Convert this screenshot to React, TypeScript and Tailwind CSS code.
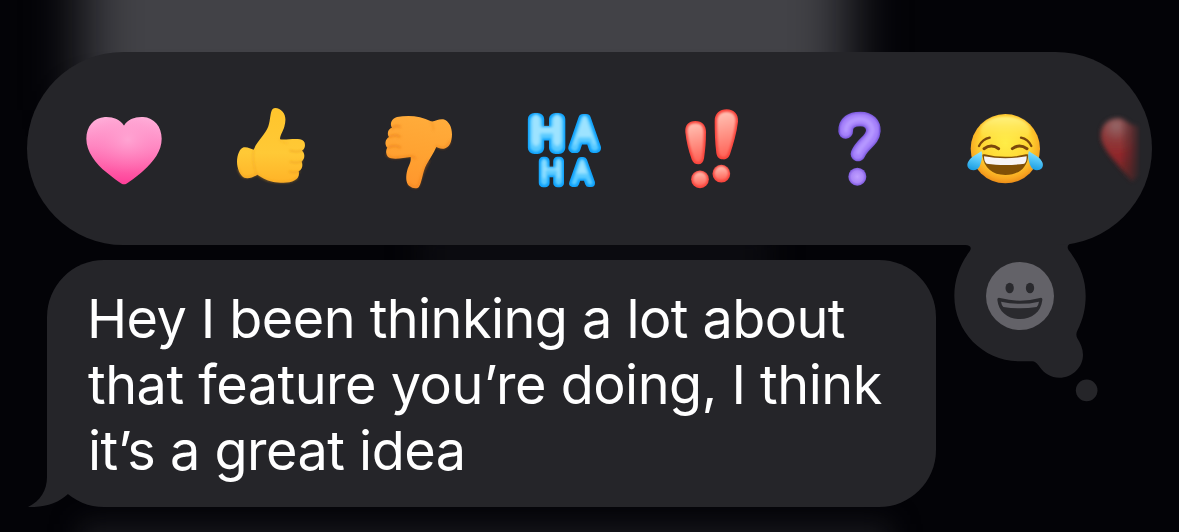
import React from 'react';

interface IconProps {
  className?: string;
}

const ICON_CLASS = 'h-[110px] w-[110px] block';

const HeartIcon = ({ className }: IconProps) => (
  <svg viewBox="-3 -6 330 330" className={className}>
    <defs>
      <linearGradient id="heart" x1="0.5" y1="0" x2="0.45" y2="1">
        <stop offset="0" stopColor="#ffb3dc" />
        <stop offset="0.45" stopColor="#ff86c1" />
        <stop offset="0.75" stopColor="#ff61aa" />
        <stop offset="1" stopColor="#ff3f98" />
      </linearGradient>
      <radialGradient id="heartShine" cx="0.55" cy="0.34" r="0.5">
        <stop offset="0" stopColor="#ffaad6" stopOpacity="0.75" />
        <stop offset="1" stopColor="#ff80bd" stopOpacity="0" />
      </radialGradient>
    </defs>
    <path
      d="M162 92C149 73 129 65 105 66C70 68 49 96 49 131C49 170 77 205 109 232C129 248 144 260 155 266Q162 269 169 266C184 257 205 240 220 227C251 199 275 168 275 131C275 94 252 68 219 66C195 65 174 73 162 92Z"
      fill="url(#heart)"
    />
    <path
      d="M162 92C149 73 129 65 105 66C70 68 49 96 49 131C49 170 77 205 109 232C129 248 144 260 155 266Q162 269 169 266C184 257 205 240 220 227C251 199 275 168 275 131C275 94 252 68 219 66C195 65 174 73 162 92Z"
      fill="url(#heartShine)"
    />
  </svg>
);

const ThumbUpIcon = ({ className }: IconProps) => (
  <svg viewBox="-12 -6 330 330" className={className}>
    <defs>
      <linearGradient id="up" x1="0.5" y1="0" x2="0.5" y2="1">
        <stop offset="0" stopColor="#ffc52c" />
        <stop offset="0.6" stopColor="#ffc936" />
        <stop offset="1" stopColor="#ffb327" />
      </linearGradient>
      <filter id="soft" x="-20%" y="-20%" width="140%" height="140%">
        <feGaussianBlur stdDeviation="2.5" />
      </filter>
    </defs>
    <path
      d="M101 164C111 139 136 119 145 94C152 74 150 50 158 42C165 35 180 41 188 50C198 62 198 78 193 95C189 109 180 120 180 133C197 136 221 129 240 133C253 135 257 145 254 157C252 163 249 165 246 167C256 175 255 192 245 200C250 212 246 224 236 229C239 241 235 250 224 256C207 266 180 264 157 260C138 256 124 247 112 239C101 247 84 252 73 248C60 242 51 219 51 200C51 181 59 160 71 157C83 155 92 162 101 164Z"
      fill="url(#up)"
    />
    <g fill="none" stroke="#eb9a20" strokeLinecap="round" filter="url(#soft)">
      <path d="M248 167Q228 173 210 167" strokeWidth="4" opacity="0.75" />
      <path d="M247 199Q227 206 211 200" strokeWidth="4" opacity="0.75" />
      <path d="M238 230Q222 235 208 230" strokeWidth="4" opacity="0.75" />
      <path d="M101 165Q95 195 109 238" strokeWidth="4" opacity="0.45" />
      <path d="M179 133Q190 145 202 144" strokeWidth="4" opacity="0.3" />
      <path d="M55 222Q63 248 80 247Q98 246 111 237Q135 260 175 261Q218 264 232 248" strokeWidth="5" opacity="0.5" />
    </g>
  </svg>
);

const ThumbDownIcon = ({ className }: IconProps) => (
  <svg viewBox="-21 -6 330 330" className={className}>
    <defs>
      <linearGradient id="down" x1="0.6" y1="0" x2="0.4" y2="1">
        <stop offset="0" stopColor="#ffac3b" />
        <stop offset="0.5" stopColor="#ffa332" />
        <stop offset="1" stopColor="#ff962d" />
      </linearGradient>
    </defs>
    <path
      d="M66 98C58 86 65 71 81 66C112 60 151 61 183 79C195 81 204 71 220 73C237 78 246 97 246 118C246 141 238 158 222 161C211 163 204 158 199 156C191 174 180 190 170 208C157 232 156 263 147 275C142 282 128 281 117 272C107 263 107 243 112 225C116 211 124 203 122 186C103 187 83 194 63 190C50 187 44 170 52 158C43 149 45 133 57 126C50 116 54 101 66 98Z"
      fill="url(#down)"
    />
    <g fill="none" stroke="#e67718" strokeLinecap="round" filter="url(#soft)">
      <path d="M66 99Q79 88 90 96" strokeWidth="4.500" opacity="0.75" />
      <path d="M57 126Q75 117 89 125" strokeWidth="4.500" opacity="0.75" />
      <path d="M53 158Q72 148 90 157" strokeWidth="4.500" opacity="0.75" />
      <path d="M50 179Q59 191 82 188L120 184Q131 184 136 190" strokeWidth="4.500" opacity="0.6" />
      <path d="M199 154Q208 161 224 158Q235 153 241 139" strokeWidth="5" opacity="0.5" />
      <path d="M116 267Q136 286 146 271Q155 237 176 197" strokeWidth="5" opacity="0.5" />
      <path d="M183 81Q191 90 190 104" strokeWidth="4" opacity="0.3" />
    </g>
  </svg>
);

const HahaIcon = ({ className }: IconProps) => (
  <svg viewBox="0 -6 330 330" className={className}>
    <defs>
      {/* lighter inner body, leaves a saturated rim round the balloon letters */}
      <filter id="balloon" x="-30%" y="-30%" width="160%" height="160%" colorInterpolationFilters="sRGB">
        <feMorphology in="SourceAlpha" operator="erode" radius="6" result="core" />
        <feGaussianBlur in="core" stdDeviation="3.5" result="glow" />
        <feFlood floodColor="#58caff" />
        <feComposite in2="glow" operator="in" result="body" />
        <feMorphology in="SourceAlpha" operator="erode" radius="13" result="inner" />
        <feOffset in="inner" dy="-9" result="lifted" />
        <feGaussianBlur in="lifted" stdDeviation="5" result="shine" />
        <feFlood floodColor="#a5e6ff" floodOpacity="0.9" />
        <feComposite in2="shine" operator="in" result="top" />
        <feMerge>
          <feMergeNode in="SourceGraphic" />
          <feMergeNode in="body" />
          <feMergeNode in="top" />
        </feMerge>
      </filter>
    </defs>
    <g
      fontFamily="Inter, sans-serif"
      fontWeight="300"
      strokeLinejoin="round"
      fill="#0fa2fb"
      stroke="#0fa2fb"
    >
      <text x="61" y="160" fontSize="120" strokeWidth="36" textLength="98" lengthAdjust="spacingAndGlyphs" filter="url(#balloon)">H</text>
      <text x="186" y="158" fontSize="118" strokeWidth="30" textLength="76" lengthAdjust="spacingAndGlyphs" filter="url(#balloon)">A</text>
      <text x="91" y="264" fontSize="90" strokeWidth="26" textLength="67" lengthAdjust="spacingAndGlyphs" filter="url(#balloon)">H</text>
      <text x="187" y="265" fontSize="90" strokeWidth="24" textLength="59" lengthAdjust="spacingAndGlyphs" filter="url(#balloon)">A</text>
    </g>
  </svg>
);

const ExclaimIcon = ({ className }: IconProps) => (
  <svg viewBox="-9 -6 330 330" className={className}>
    <defs>
      <linearGradient id="bang" x1="0.4" y1="0" x2="0.5" y2="1">
        <stop offset="0" stopColor="#ffc0b3" />
        <stop offset="0.55" stopColor="#ff8d80" />
        <stop offset="1" stopColor="#ff6257" />
      </linearGradient>
    </defs>
    <g fill="#f8443c">
      <path d="M76 111C74 91 86 78 106 78C127 78 138 91 138 112C138 139 136 163 132 190C130 202 124 208 115 208C106 208 99 204 95 193C85 165 79 140 76 111Z" />
      <path d="M164 78C164 56 179 43 200 43C222 43 236 58 234 80C230 115 220 147 210 178C206 189 199 194 189 193C178 193 171 187 169 174C165 142 164 110 164 78Z" />
      <circle cx="120" cy="253" r="26.500" />
      <circle cx="184" cy="236" r="26.500" />
    </g>
    <g fill="url(#bang)" filter="url(#soft)">
      <path d="M82 112C81 94 90 85 106 85C123 85 131 95 131 112C131 139 129 163 126 187C124 196 121 201 115 201C109 201 104 197 101 189C91 163 85 139 82 112Z" />
      <path d="M171 79C171 61 182 50 200 50C218 50 229 62 227 80C223 114 214 147 204 175C200 183 196 187 189 186C182 186 178 181 176 172C172 142 171 110 171 79Z" />
      <circle cx="120" cy="252" r="21" />
      <circle cx="184" cy="235" r="21" />
    </g>
  </svg>
);

const QuestionIcon = ({ className }: IconProps) => (
  <svg viewBox="-18 -6 330 330" className={className}>
    <defs>
      <radialGradient id="questionDot" cx="0.5" cy="0.5" r="0.5">
        <stop offset="0" stopColor="#bf9fff" />
        <stop offset="0.65" stopColor="#ab87f8" />
        <stop offset="1" stopColor="#7e5ade" />
      </radialGradient>
    </defs>
    <g fill="none" strokeLinecap="round" strokeLinejoin="round">
      <path d="M107 109C106 83 125 72 151 72C177 72 191 88 190 108C188 137 157 145 144 177" stroke="#7957dc" strokeWidth="44" />
      <path d="M107 109C106 83 125 72 151 72C177 72 191 88 190 108C188 137 157 145 144 177" stroke="#a682fb" strokeWidth="35" filter="url(#soft)" />
      <path d="M108 106C109 85 128 73 151 72C170 73 185 84 188 106C185 132 157 145 145 172" stroke="#b597ff" strokeWidth="14" filter="url(#soft)" />
    </g>
    <circle cx="142" cy="245" r="27" fill="url(#questionDot)" />
  </svg>
);

const JoyIcon = ({ className }: IconProps) => (
  <svg viewBox="3 -6 330 330" className={className}>
    <defs>
      <radialGradient id="joy" cx="0.5" cy="0.42" r="0.6">
        <stop offset="0" stopColor="#ffed47" />
        <stop offset="0.6" stopColor="#ffd532" />
        <stop offset="0.86" stopColor="#f8a621" />
        <stop offset="1" stopColor="#e88616" />
      </radialGradient>
      <linearGradient id="joyTop" x1="0" y1="0" x2="0" y2="1">
        <stop offset="0" stopColor="#fff58a" stopOpacity="0.9" />
        <stop offset="1" stopColor="#ffec4a" stopOpacity="0" />
      </linearGradient>
      <linearGradient id="tear" x1="0.6" y1="0" x2="0.4" y2="1">
        <stop offset="0" stopColor="#91e6ff" />
        <stop offset="0.5" stopColor="#50c3f6" />
        <stop offset="1" stopColor="#199ce1" />
      </linearGradient>
    </defs>
    <circle cx="166" cy="161" r="104" fill="url(#joy)" />
    <ellipse cx="166" cy="107" rx="75" ry="42" fill="url(#joyTop)" filter="url(#soft)" />
    <g fill="none" stroke="#7c480b" strokeLinecap="round" strokeWidth="7">
      <path d="M87 153Q98 132 119 128" />
      <path d="M213 128Q234 132 244 153" />
      <path d="M102 161Q124 145 146 161" strokeWidth="9" />
      <path d="M187 161Q208 145 231 161" strokeWidth="9" />
    </g>
    <path d="M97 181Q97 176 104 178C145 188 186 188 228 178Q236 176 235 182C231 219 205 240 166 240C127 240 102 219 97 181Z" fill="#815006" />
    <path d="M102 184C145 192 187 192 230 184C230 195 228 203 223 206C188 211 145 211 110 206C105 203 102 195 102 184Z" fill="#f7f4f5" />
    <path d="M94 168C99 179 95 200 89 214C82 228 64 229 55 219C47 208 57 194 67 186C78 178 87 174 94 168Z" fill="url(#tear)" />
    <path d="M237 168C232 179 236 200 242 214C249 228 267 229 276 219C284 208 274 194 264 186C253 178 244 174 237 168Z" fill="url(#tear)" />
  </svg>
);

// next emoji in the strip, fading out under the right edge
const FadedHeartIcon = ({ className }: IconProps) => (
  <svg viewBox="57 159 219 330" className={className}>
    <defs>
      <radialGradient id="faded" gradientUnits="userSpaceOnUse" cx="165" cy="257" r="155">
        <stop offset="0" stopColor="#946869" />
        <stop offset="0.3" stopColor="#8d393a" />
        <stop offset="0.55" stopColor="#91282a" />
        <stop offset="1" stopColor="#6d2626" />
      </radialGradient>
      <linearGradient id="fadeEdge" gradientUnits="userSpaceOnUse" x1="178" y1="0" x2="240" y2="0">
        <stop offset="0" stopColor="#fff" />
        <stop offset="0.5" stopColor="#999" />
        <stop offset="1" stopColor="#000" />
      </linearGradient>
      <mask id="fadeMask" maskUnits="userSpaceOnUse" x="57" y="159" width="219" height="330">
        <rect x="57" y="159" width="219" height="330" fill="url(#fadeEdge)" />
      </mask>
      <filter id="heartBlur" x="-30%" y="-30%" width="160%" height="160%">
        <feGaussianBlur stdDeviation="7" />
      </filter>
    </defs>
    <g mask="url(#fadeMask)">
      <path
        d="M200 247C186 235 172 232 155 237C132 244 118 264 120 292C124 329 168 371 214 424L253 395V262C234 258 214 258 200 247Z"
        fill="url(#faded)"
        filter="url(#heartBlur)"
      />
    </g>
  </svg>
);

const reactions = [
  { name: 'Love', Icon: HeartIcon },
  { name: 'Like', Icon: ThumbUpIcon },
  { name: 'Dislike', Icon: ThumbDownIcon },
  { name: 'Laugh', Icon: HahaIcon },
  { name: 'Emphasize', Icon: ExclaimIcon },
  { name: 'Question', Icon: QuestionIcon },
  { name: 'Joy', Icon: JoyIcon },
];

const ReactionBar = () => (
  <div className="relative ml-[27px] mt-[52px] flex h-[193px] w-[1125px] shrink-0 items-center overflow-hidden rounded-full bg-[#252529] pb-px pl-[23.5px]">
    {reactions.map(({ name, Icon }) => (
      <button key={name} aria-label={name} className="flex w-[147px] shrink-0 justify-center">
        <Icon className={ICON_CLASS} />
      </button>
    ))}
    <FadedHeartIcon className="block h-[110px] w-[73px] shrink-0" />
  </div>
);

const PickerTail = () => (
  <svg viewBox="0 0 600 600" className="-ml-1.5 -mt-10 block h-[200px] w-[200px] shrink-0">
    <path
      d="M75 75H105C122 76 126 82 119 94C89 134 73 179 73 228C73 337 161 424 270 424H303C316 424 321 430 329 441C343 461 363 473 388 473C427 473 459 442 459 404C459 386 451 370 442 355C438 347 438 339 443 330C459 298 467 264 467 228C467 176 450 134 416 91C410 80 413 73 426 69L440 60H75Z"
      fill="#252529"
    />
    <circle cx="470" cy="511" r="32.500" fill="#252529" />
    <circle cx="270" cy="228" r="102" fill="#636268" />
    <ellipse cx="239" cy="204" rx="12.500" ry="16" fill="#2a2a2e" />
    <ellipse cx="300" cy="204" rx="12.500" ry="16" fill="#2a2a2e" />
    <path d="M202 239Q202 232 210 234Q270 250 330 234Q338 232 337 240C333 277 305 297 270 297C235 297 206 277 202 239Z" fill="#2a2a2e" />
    <path d="M213 245Q270 258 327 245Q325 257 320 261Q270 269 220 261Q215 257 213 245Z" fill="#636268" />
  </svg>
);

const MessageBubble = () => (
  <div className="relative ml-[47px] h-[247px] w-[889px] shrink-0 rounded-[57px] bg-[#252529] pl-[41px] pt-[26px]">
    <svg viewBox="84 51 123 180" className="absolute bottom-0 -left-[19px] h-[60px] w-[41px]">
      <path d="M141 51V140C141 181 121 213 84 231C135 233 175 219 204 192V51Z" fill="#252529" />
    </svg>
    <p className="relative whitespace-nowrap font-['Inter',sans-serif] text-[54px] leading-[65.8px] text-white">
      <span className="-ml-px block tracking-[-0.57px]">Hey I been thinking a lot about</span>
      <span className="block tracking-[-0.5px]">that feature you’re doing, I think</span>
      <span className="block tracking-[-0.5px]">it’s a great idea</span>
    </p>
  </div>
);

const Backdrop = () => (
  <div className="absolute inset-0 overflow-hidden bg-[#030307]">
    <div className="absolute -top-20 left-[84px] h-[190px] w-[764px] bg-[#424247] blur-[28px]" />
    <div className="absolute left-[420px] top-[235px] h-[40px] w-[350px] bg-[#0d0d12] blur-[15px]" />
    <div className="absolute left-[80px] top-[524px] h-[50px] w-[810px] bg-[#17171c] blur-[14px]" />
  </div>
);

const App = () => {
  return (
    <main className="relative h-[532px] w-[1179px] overflow-hidden">
      <Backdrop />
      <div className="relative flex flex-col">
        <ReactionBar />
        <div className="mt-[15px] flex items-start">
          <MessageBubble />
          <PickerTail />
        </div>
      </div>
    </main>
  );
};

export default App;
